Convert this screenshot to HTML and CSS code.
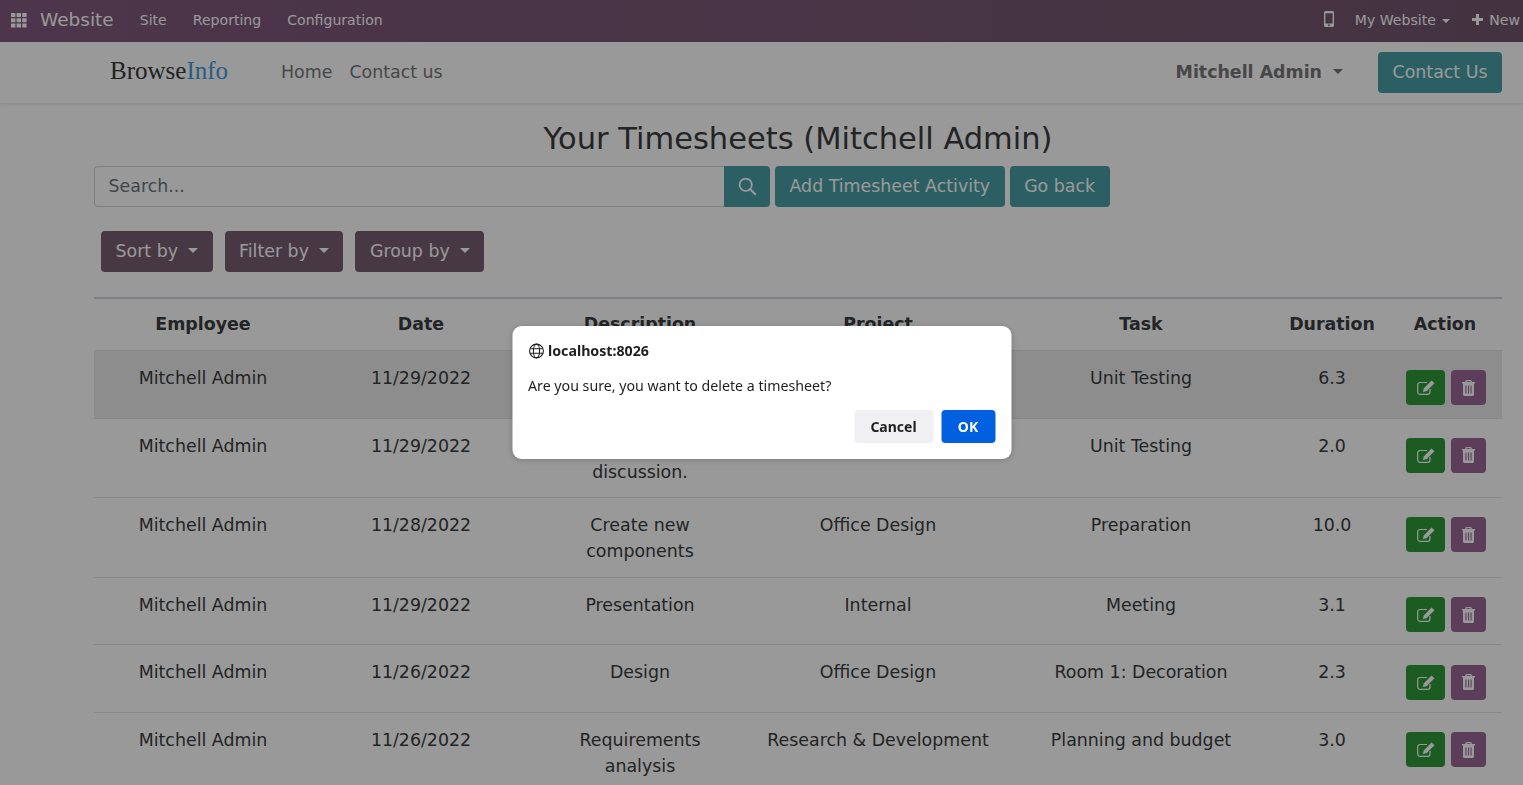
FILE: index.html
```html
<!DOCTYPE html>
<html lang="en">
<head>
    <meta charset="UTF-8">
    <meta name="viewport" content="width=device-width, initial-scale=1.0">
    <title>Your Timesheets</title>
    <link rel="stylesheet" href="styles.css">
</head>
<body>

    <nav class="topbar">
        <svg class="apps-icon" width="16" height="15" viewBox="0 0 16 15">
            <path fill="currentColor" d="M0 0h4.400v4H0zM5.600 0H10v4H5.600zM11.200 0h4.400v4h-4.400zM0 5.300h4.400v4H0zM5.600 5.300H10v4H5.600zM11.200 5.300h4.400v4h-4.400zM0 10.600h4.400v4H0zM5.600 10.600H10v4H5.600zM11.200 10.600h4.400v4h-4.400z"/>
        </svg>
        <span class="brand">Website</span>
        <a class="topbar-link">Site</a>
        <a class="topbar-link">Reporting</a>
        <a class="topbar-link">Configuration</a>
        <div class="topbar-right">
            <svg class="mobile-icon" width="10" height="16" viewBox="0 0 10 15" preserveAspectRatio="none">
                <path fill="currentColor" fill-rule="evenodd" d="M1.500 0h7A1.500 1.500 0 0 1 10 1.500v12A1.500 1.500 0 0 1 8.500 15h-7A1.500 1.500 0 0 1 0 13.500v-12A1.500 1.500 0 0 1 1.500 0zM1.400 2.200v9.600h7.200V2.200zM5 12.400a.9.9 0 1 0 0 1.800.9.9 0 0 0 0-1.800z"/>
            </svg>
            <a class="topbar-link caret-small">My Website</a>
            <a class="topbar-link new-link">
                <svg class="plus-icon" width="11" height="11" viewBox="0 0 11 11"><path fill="currentColor" d="M4 0h3v4h4v3H7v4H4V7H0V4h4z"/></svg>
                New
            </a>
        </div>
    </nav>

    <header class="site-header">
        <a class="logo">Browse<span>Info</span></a>
        <a class="nav-link">Home</a>
        <a class="nav-link">Contact us</a>
        <a class="user-menu caret">Mitchell Admin</a>
        <button class="btn btn-teal">Contact Us</button>
    </header>

    <main class="content">
        <h1>Your Timesheets (Mitchell Admin)</h1>

        <div class="search-row">
            <div class="search-box">Search...</div>
            <button class="btn btn-teal search-btn">
                <svg width="19" height="19" viewBox="0 0 18 18"><circle cx="7.300" cy="7.300" r="5.800" fill="none" stroke="currentColor" stroke-width="1.700"/><path d="M11.600 11.600l5.200 5.200" stroke="currentColor" stroke-width="2"/></svg>
            </button>
            <button class="btn btn-teal">Add Timesheet Activity</button>
            <button class="btn btn-teal">Go back</button>
        </div>

        <div class="filter-row">
            <button class="btn btn-plum caret">Sort by</button>
            <button class="btn btn-plum caret">Filter by</button>
            <button class="btn btn-plum caret">Group by</button>
        </div>

        <table class="sheet-table">
            <thead>
                <tr>
                    <th class="col-employee">Employee</th>
                    <th class="col-date">Date</th>
                    <th class="col-desc">Description</th>
                    <th class="col-project">Project</th>
                    <th class="col-task">Task</th>
                    <th class="col-duration">Duration</th>
                    <th class="col-action">Action</th>
                </tr>
            </thead>
            <tbody id="sheetBody"></tbody>
        </table>
    </main>

    <div class="overlay"></div>

    <div class="dialog">
        <div class="dialog-origin">
            <svg width="16" height="16" viewBox="0 0 16 16" fill="none" stroke="currentColor" stroke-width="1.100">
                <circle cx="8" cy="8" r="6.900"/>
                <ellipse cx="8" cy="8" rx="3.100" ry="6.900"/>
                <path d="M1.500 5.700h13M1.500 10.300h13"/>
            </svg>
            localhost:8026
        </div>
        <p class="dialog-text">Are you sure, you want to delete a timesheet?</p>
        <div class="dialog-actions">
            <button class="dialog-btn dialog-cancel">Cancel</button>
            <button class="dialog-btn dialog-ok">OK</button>
        </div>
    </div>

    <script>
        const rows = [
            ["11/29/2022", "Bug fixing", "Research & Development", "Unit Testing", "6.3"],
            ["11/29/2022", "Requirements discussion.", "Research & Development", "Unit Testing", "2.0"],
            ["11/28/2022", "Create new components", "Office Design", "Preparation", "10.0"],
            ["11/29/2022", "Presentation", "Internal", "Meeting", "3.1"],
            ["11/26/2022", "Design", "Office Design", "Room 1: Decoration", "2.3"],
            ["11/26/2022", "Requirements analysis", "Research & Development", "Planning and budget", "3.0"]
        ];

        const editIcon = `<svg width="18" height="15" viewBox="0 0 18 15">
            <path fill="none" stroke="currentColor" stroke-width="1.200" d="M13 9v3a2.300 2.300 0 0 1-2.300 2.300H3A2.300 2.300 0 0 1 .7 12V4.800A2.300 2.300 0 0 1 3 2.500h7"/>
            <path fill="currentColor" d="M14.500.5l3 2.800-8 8-3.600.8.800-3.600z"/>
        </svg>`;

        const trashIcon = `<svg width="13" height="16" viewBox="0 0 13 16">
            <path fill="currentColor" fill-rule="evenodd" d="M4.500 0h4a1 1 0 0 1 .9.600l.7 1.400H13v1.500h-1V14.500a1.500 1.500 0 0 1-1.500 1.500h-8A1.500 1.500 0 0 1 1 14.500V3.500H0V2h2.900l.7-1.400a1 1 0 0 1 .9-.6zM4.700 1.200l-.4.800h4.400l-.4-.8zM3.400 5.500v8h1.100v-8zM6 5.500v8h1.100v-8zM8.500 5.500v8h1.100v-8z"/>
        </svg>`;

        const sheetBody = document.getElementById("sheetBody");
        rows.forEach(row => {
            sheetBody.innerHTML += `<tr>
                <td>Mitchell Admin</td>
                <td>${row[0]}</td>
                <td class="desc-cell">${row[1]}</td>
                <td>${row[2].replace("&", "&amp;")}</td>
                <td>${row[3]}</td>
                <td>${row[4]}</td>
                <td class="action-cell">
                    <div class="action-group">
                        <button class="icon-btn icon-edit">${editIcon}</button>
                        <button class="icon-btn icon-trash">${trashIcon}</button>
                    </div>
                </td>
            </tr>`;
        });
    </script>
</body>
</html>
```

FILE: styles.css
```css
/* General body styling */
html, body {
    height: 100%;
    overflow: hidden;
}

body {
    margin: 0;
    font-family: "DejaVu Sans", sans-serif;
    font-size: 17.4px;
    line-height: 26px;
    color: #3a3c40;
    background-color: #fff;
}

button {
    font-family: inherit;
}

/* Top bar */
.topbar {
    display: flex;
    align-items: center;
    height: 42px;
    padding-left: 11px;
    color: #fff;
    background: linear-gradient(to right, #81597d, #71566d);
}

.apps-icon {
    margin-right: 13px;
    margin-bottom: 1px;
}

.brand {
    font-size: 18.500px;
    margin-right: 26px;
    padding-bottom: 2px;
}

.topbar-link {
    font-size: 14.080px;
    margin-right: 26px;
    padding-bottom: 2px;
    white-space: nowrap;
}

.topbar-right {
    display: flex;
    align-items: center;
    margin-left: auto;
}

.mobile-icon {
    margin-right: 21px;
    margin-bottom: 4px;
}

.caret-small {
    margin-right: 22px;
}

.caret-small::after {
    content: "";
    display: inline-block;
    margin-left: 6px;
    vertical-align: 2px;
    border-top: 4px solid;
    border-left: 4.500px solid transparent;
    border-right: 4.500px solid transparent;
}

.new-link {
    margin-right: 3px;
}

.plus-icon {
    margin-right: 2px;
}

/* Site header */
.site-header {
    display: flex;
    align-items: center;
    height: 61px;
    padding: 0 21px 0 110px;
    box-shadow: 0 1px 3px rgba(0, 0, 0, 0.12);
}

.logo {
    font-family: "Liberation Serif", serif;
    font-size: 25px;
    color: #3a3a3a;
    margin-right: 53px;
    padding-bottom: 3px;
}

.logo span {
    color: #3f9be0;
}

.nav-link {
    color: #777;
    margin-right: 17px;
    padding-bottom: 1px;
}

.user-menu {
    margin-left: auto;
    margin-right: 35px;
    padding-bottom: 1px;
    font-weight: 700;
    color: #777;
}

.caret::after {
    content: "";
    display: inline-block;
    margin-left: 11px;
    vertical-align: 4px;
    border-top: 5px solid;
    border-left: 5px solid transparent;
    border-right: 5px solid transparent;
}

/* Buttons */
.btn {
    height: 41px;
    padding: 0 14.500px 2px;
    border: none;
    border-radius: 4px;
    font-size: 17.4px;
    color: #fff;
    white-space: nowrap;
}

.btn-teal {
    background-color: #4a9fa6;
}

.btn-plum {
    background-color: #785e72;
}

.btn-plum.caret::after {
    margin-left: 10px;
}

/* Main content */
.content {
    margin: 0 21px 0 94px;
}

h1 {
    margin: 18px 0 9px;
    font-size: 30.500px;
    font-weight: 400;
    line-height: 36px;
    text-align: center;
}

.search-row {
    display: flex;
    gap: 5px;
}

.search-box {
    box-sizing: border-box;
    width: 630px;
    height: 41px;
    margin-right: -5px;
    padding: 0 13.500px;
    line-height: 39px;
    color: #6c757d;
    border: 1px solid #ced4da;
    border-right: none;
    border-radius: 4px 0 0 4px;
}

.search-btn {
    display: flex;
    align-items: center;
    justify-content: center;
    width: 46px;
    padding: 0;
    border-radius: 0 4px 4px 0;
}

.filter-row {
    display: flex;
    gap: 12px;
    margin: 24px 0 25px 7px;
}

/* Table styling */
.sheet-table {
    width: 100%;
    table-layout: fixed;
    border-collapse: collapse;
    border-top: 2px solid #d0d0dc;
}

.sheet-table th,
.sheet-table td {
    box-sizing: border-box;
    padding: 14px 17px 12.600px;
    text-align: center;
    vertical-align: top;
}

.sheet-table th {
    padding: 12px 5px 13px;
    font-weight: 700;
}

.sheet-table thead tr,
.sheet-table tbody tr {
    border-bottom: 1px solid #dee2e6;
}

.sheet-table tbody tr:first-child td {
    background-color: #ececec;
}

.col-employee { width: 218px; }
.col-date { width: 218px; }
.col-desc { width: 220px; }
.col-project { width: 256px; }
.col-task { width: 270px; }
.col-duration { width: 112px; }
.col-action { width: 114px; }

.sheet-table .desc-cell {
    padding-left: 30px;
    padding-right: 30px;
}

.sheet-table .action-cell {
    padding: 0;
}

.action-group {
    display: flex;
    justify-content: center;
    gap: 6px;
    padding: 19.300px 0 12.300px 2px;
}

.icon-btn {
    display: flex;
    align-items: center;
    justify-content: center;
    height: 35px;
    padding: 0;
    border: none;
    border-radius: 4px;
    color: #fff;
}

.icon-edit {
    width: 39px;
    background-color: #2f9a3a;
}

.icon-trash {
    width: 35px;
    background-color: #9a6896;
}

/* Dim layer and confirm dialog */
.overlay {
    position: fixed;
    inset: 0;
    background-color: rgba(0, 0, 0, 0.4);
}

.dialog {
    position: fixed;
    top: 326px;
    left: 50%;
    transform: translateX(-50%);
    box-sizing: border-box;
    width: 499px;
    height: 133px;
    padding: 16px;
    border-radius: 9px;
    background-color: #fff;
    box-shadow: 0 1px 6px rgba(0, 0, 0, 0.2);
    font-family: "Noto Sans", sans-serif;
    font-size: 14.200px;
    line-height: 18px;
    color: #1f1f1f;
}

.dialog-origin {
    display: flex;
    align-items: center;
    gap: 4px;
    font-weight: 700;
}

.dialog-text {
    margin: 17px 0 15px;
}

.dialog-actions {
    display: flex;
    justify-content: flex-end;
    gap: 8px;
}

.dialog-btn {
    height: 33px;
    border: none;
    border-radius: 4px;
    font-family: inherit;
    font-size: 14px;
    font-weight: 700;
}

.dialog-cancel {
    width: 79px;
    color: #1f1f1f;
    background-color: #f0f0f3;
}

.dialog-ok {
    width: 54px;
    color: #fff;
    background-color: #0060df;
}
```
